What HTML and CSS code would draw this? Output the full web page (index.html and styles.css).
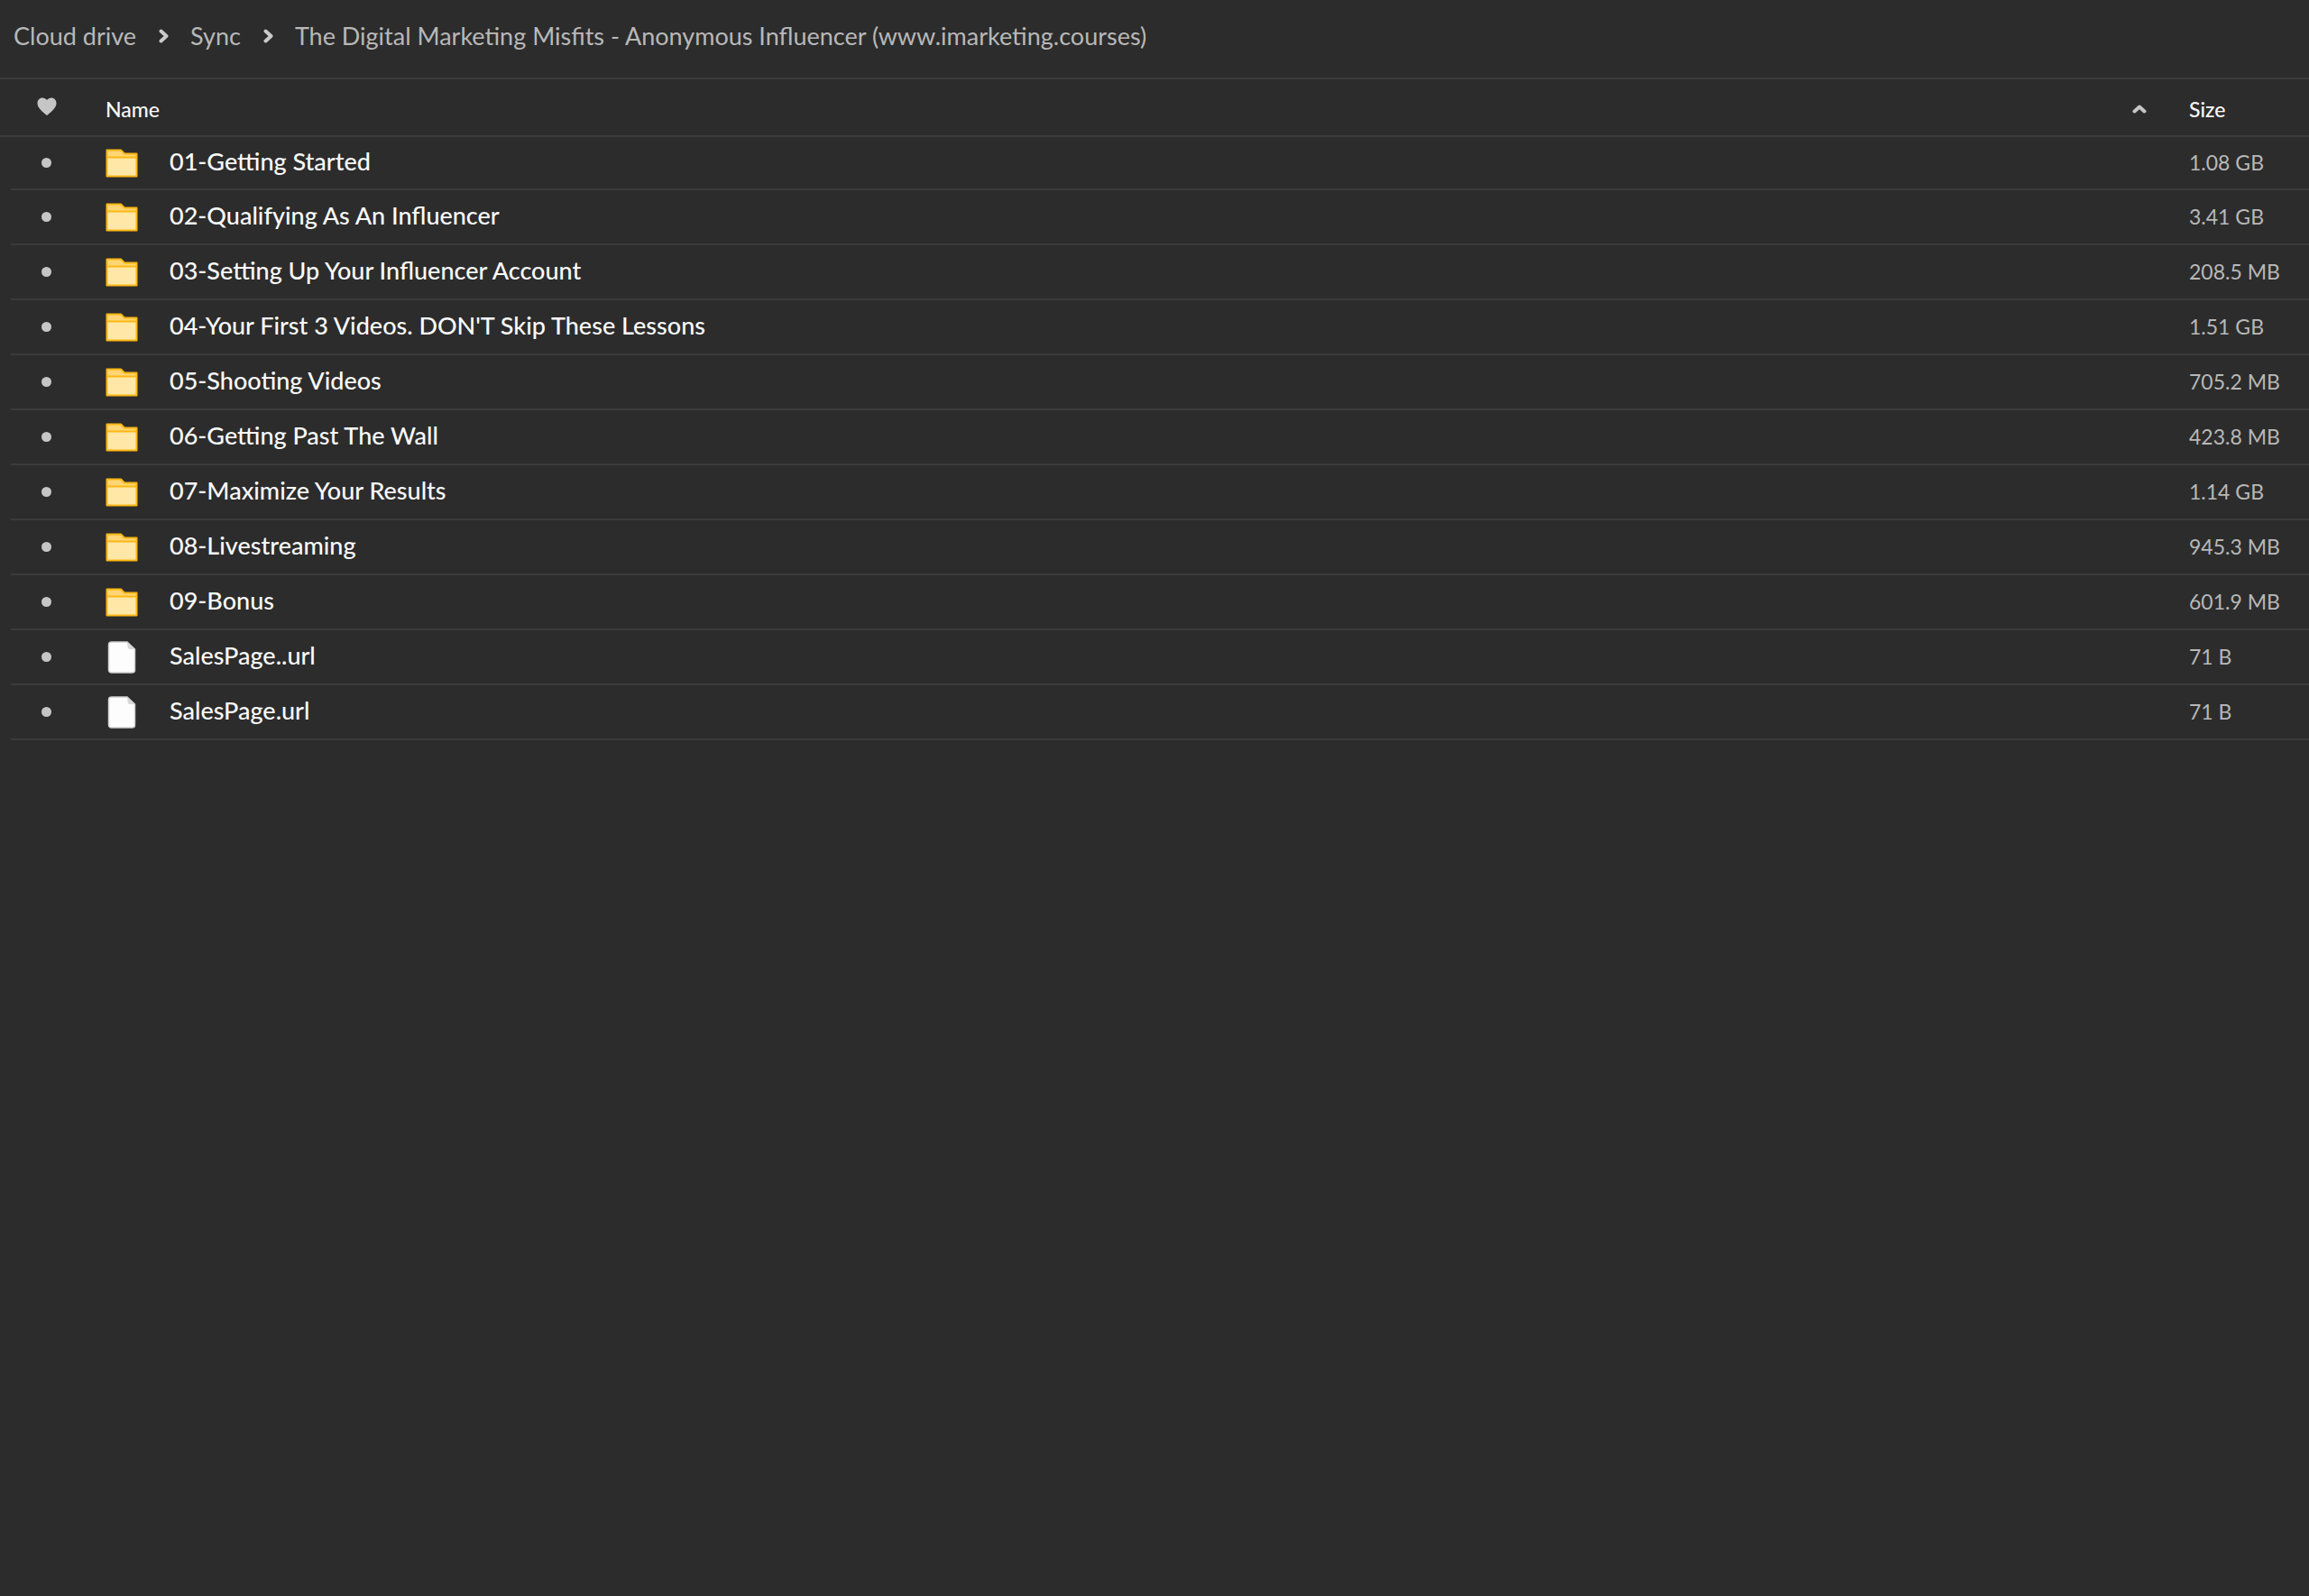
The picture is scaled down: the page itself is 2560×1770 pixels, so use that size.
FILE: index.html
```html
<!DOCTYPE html>
<html lang="en">
<head>
    <meta charset="UTF-8">
    <meta name="viewport" content="width=device-width, initial-scale=1.0">
    <title>Cloud drive</title>
    <link rel="stylesheet" href="styles.css">
</head>
<body>
    <!-- Shared icons -->
    <svg class="sprite" aria-hidden="true">
        <symbol id="icon-next" viewBox="0 0 12 16">
            <path d="M2.5 2.5 8.5 8l-6 5.500" fill="none" stroke="currentColor" stroke-width="4" stroke-linecap="round" stroke-linejoin="round"/>
        </symbol>
        <symbol id="icon-folder" viewBox="0 0 36 32">
            <path d="M1 1h16l4 4h14v26H1z" fill="#ffd675"/>
            <path d="M1 10h34v21H1z" fill="#ffe7a8"/>
            <path d="M1.500 1.500h15.500l4 4h13.500v25h-33zM1.500 9.500h33" fill="none" stroke="#fcb712" stroke-width="2" stroke-linejoin="round"/>
        </symbol>
        <symbol id="icon-file" viewBox="0 0 36 36">
            <path d="M6 1h18l8.500 8v23a3 3 0 0 1-3 3H6.500a3 3 0 0 1-3-3V4a3 3 0 0 1 3-3z" fill="#fdfdfd" stroke="#cfcfcf" stroke-width="1.500"/>
            <path d="M24 1l8.500 8h-5a3 3 0 0 1-3-3z" fill="#d8d8d8"/>
        </symbol>
    </svg>

    <nav class="breadcrumb" aria-label="Path">
        <a href="#">Cloud drive</a>
        <svg class="next"><use href="#icon-next"/></svg>
        <a href="#">Sync</a>
        <svg class="next"><use href="#icon-next"/></svg>
        <a href="#">The Digital Marketing Misfits - Anonymous Influencer (www.imarketing.courses)</a>
    </nav>

    <table class="files">
        <thead>
            <tr>
                <th class="fav">
                    <svg class="heart" viewBox="0 0 22 20" role="img" aria-label="Favourite"><path d="M11 20C7 16.500.5 12 .5 6.500.5 3 3 .5 6 .5c2 0 4 1 5 2.500 1-1.500 3-2.500 5-2.500 3 0 5.500 2.500 5.500 6C21.500 12 15 16.500 11 20z" fill="currentColor"/></svg>
                </th>
                <th class="name">
                    <button type="button" class="sort">
                        Name
                        <svg class="arrow" viewBox="0 0 16 12"><path d="M2.500 8.500 8 3.500l5.500 5" fill="none" stroke="currentColor" stroke-width="4" stroke-linecap="round" stroke-linejoin="round"/></svg>
                    </button>
                </th>
                <th class="size"><button type="button" class="sort">Size</button></th>
            </tr>
        </thead>
        <tbody>
            <tr>
                <td class="fav"><span class="dot"></span></td>
                <td class="name"><a href="#"><svg class="icon"><use href="#icon-folder"/></svg><span class="label">01-Getting Started</span></a></td>
                <td class="size">1.08 GB</td>
            </tr>
            <tr>
                <td class="fav"><span class="dot"></span></td>
                <td class="name"><a href="#"><svg class="icon"><use href="#icon-folder"/></svg><span class="label">02-Qualifying As An Influencer</span></a></td>
                <td class="size">3.41 GB</td>
            </tr>
            <tr>
                <td class="fav"><span class="dot"></span></td>
                <td class="name"><a href="#"><svg class="icon"><use href="#icon-folder"/></svg><span class="label">03-Setting Up Your Influencer Account</span></a></td>
                <td class="size">208.5 MB</td>
            </tr>
            <tr>
                <td class="fav"><span class="dot"></span></td>
                <td class="name"><a href="#"><svg class="icon"><use href="#icon-folder"/></svg><span class="label">04-Your First 3 Videos. DON'T Skip These Lessons</span></a></td>
                <td class="size">1.51 GB</td>
            </tr>
            <tr>
                <td class="fav"><span class="dot"></span></td>
                <td class="name"><a href="#"><svg class="icon"><use href="#icon-folder"/></svg><span class="label">05-Shooting Videos</span></a></td>
                <td class="size">705.2 MB</td>
            </tr>
            <tr>
                <td class="fav"><span class="dot"></span></td>
                <td class="name"><a href="#"><svg class="icon"><use href="#icon-folder"/></svg><span class="label">06-Getting Past The Wall</span></a></td>
                <td class="size">423.8 MB</td>
            </tr>
            <tr>
                <td class="fav"><span class="dot"></span></td>
                <td class="name"><a href="#"><svg class="icon"><use href="#icon-folder"/></svg><span class="label">07-Maximize Your Results</span></a></td>
                <td class="size">1.14 GB</td>
            </tr>
            <tr>
                <td class="fav"><span class="dot"></span></td>
                <td class="name"><a href="#"><svg class="icon"><use href="#icon-folder"/></svg><span class="label">08-Livestreaming</span></a></td>
                <td class="size">945.3 MB</td>
            </tr>
            <tr>
                <td class="fav"><span class="dot"></span></td>
                <td class="name"><a href="#"><svg class="icon"><use href="#icon-folder"/></svg><span class="label">09-Bonus</span></a></td>
                <td class="size">601.9 MB</td>
            </tr>
            <tr>
                <td class="fav"><span class="dot"></span></td>
                <td class="name"><a href="#"><svg class="icon"><use href="#icon-file"/></svg><span class="label">SalesPage..url</span></a></td>
                <td class="size">71 B</td>
            </tr>
            <tr>
                <td class="fav"><span class="dot"></span></td>
                <td class="name"><a href="#"><svg class="icon"><use href="#icon-file"/></svg><span class="label">SalesPage.url</span></a></td>
                <td class="size">71 B</td>
            </tr>
        </tbody>
    </table>
</body>
</html>
```
FILE: styles.css
```css
* {
    margin: 0;
    padding: 0;
    box-sizing: border-box;
}

body {
    background-color: #2c2c2c;
    color: #fafafa;
    font-family: Lato, sans-serif;
    font-size: 27px;
}

a {
    color: inherit;
    text-decoration: none;
}

.sprite {
    display: none;
}

.breadcrumb {
    display: flex;
    align-items: center;
    gap: 23px;
    height: 86px;
    padding: 0 15px 7px;
    color: #b8b8b8;
}

.next {
    width: 12px;
    height: 16px;
    margin-left: 2px;
    color: #cacaca;
}

.files {
    width: 100%;
    table-layout: fixed;
    border-collapse: separate;
    border-spacing: 0;
    text-align: left;
}

/* row lines are backgrounds so the first one can start inset */
.files th,
.files td {
    background: linear-gradient(#3b3b3b, #3b3b3b) 0 100% / 100% 2px no-repeat;
}

.files th {
    height: 66px;
    border-top: 2px solid #3b3b3b;
}

.files td {
    height: 61px;
    padding-bottom: 2px;
}

.files tbody tr:first-child td {
    height: 59px;
}

.files td.fav {
    background-position: 12px 100%;
}

.fav {
    width: 103px;
    text-align: center;
    color: #c6c6c6;
}

.heart {
    display: block;
    width: 22px;
    height: 20px;
    margin: 0 auto 4px;
}

.dot {
    display: block;
    width: 11px;
    height: 11px;
    margin: 0 auto;
    border-radius: 50%;
    background-color: #c6c6c6;
}

.name {
    padding-left: 14px;
}

.name a {
    display: flex;
    align-items: center;
    gap: 35px;
    font-weight: 500;
}

.icon {
    width: 36px;
    height: 36px;
}

.label {
    padding-bottom: 4px;
}

.sort {
    display: flex;
    align-items: center;
    justify-content: space-between;
    width: 100%;
    padding-top: 2px;
    border: none;
    background: none;
    color: #fafafa;
    font-family: inherit;
    font-size: 23px;
    font-weight: 500;
    cursor: pointer;
}

.arrow {
    width: 16px;
    height: 12px;
    margin-right: 47px;
    color: #c6c6c6;
}

.size {
    width: 133px;
    font-size: 23px;
}

.files td.size {
    padding-bottom: 4px;
    color: #b8b8b8;
}
```
